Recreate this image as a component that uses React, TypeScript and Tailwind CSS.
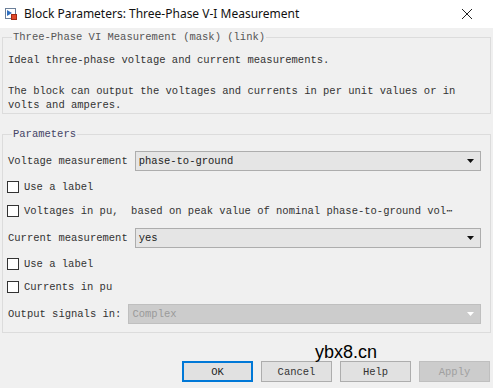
import React from 'react';

const mono = "font-['Liberation_Mono','DejaVu_Sans_Mono',monospace] text-[10.5px] leading-[14px]";

function BlockIcon() {
  return (
    <svg width="12" height="12" viewBox="0 0 12 12" className="shrink-0">
      <rect x="0.5" y="0.5" width="10" height="10" fill="#ffffff" stroke="#6b7f99" />
      <path d="M2 2 L7 5 L2 8 Z" fill="#2f6fc0" />
      <rect x="6.5" y="6.5" width="5" height="5" fill="#e0482a" stroke="#a02a14" />
    </svg>
  );
}

function Checkbox({ label }: { label: string }) {
  return (
    <div className="flex h-[20px] items-center gap-[5px]">
      <span className="ml-[-1px] h-[12px] w-[12px] shrink-0 border border-[#333333] bg-white" />
      <span className="whitespace-pre text-[#333333]">{label}</span>
    </div>
  );
}

function Select({ label, value, disabled }: { label: string; value: string; disabled?: boolean }) {
  return (
    <div className="flex h-[20px] items-center gap-[7px]">
      <span className="whitespace-pre text-[#333333]">{label}</span>
      <div
        className={
          disabled
            ? 'flex h-[20px] flex-1 items-center justify-between border border-[#bfbfbf] bg-[#cccccc] pl-[3px] pr-[6px]'
            : 'flex h-[20px] flex-1 items-center justify-between border border-[#adadad] bg-[#e5e5e5] pl-[3px] pr-[6px]'
        }
      >
        <span className={disabled ? 'text-[#9a9a9a]' : 'text-[#222222]'}>{value}</span>
        <svg width="7" height="4" viewBox="0 0 7 4">
          <path d="M0 0 H7 L3.5 4 Z" fill={disabled ? '#ffffff' : '#111111'} />
        </svg>
      </div>
    </div>
  );
}

function Button({ label, primary, disabled }: { label: string; primary?: boolean; disabled?: boolean }) {
  const cls = primary
    ? 'border-2 border-[#0078d7] bg-[#e1e1e1] text-[#222222]'
    : disabled
    ? 'border border-[#bfbfbf] bg-[#cccccc] text-[#a0a0a0]'
    : 'border border-[#adadad] bg-[#e1e1e1] text-[#333333]';
  return (
    <div className={`flex h-[21px] w-[71px] items-center justify-center ${cls}`}>{label}</div>
  );
}

export default function App() {
  return (
    <div className="relative flex h-[388px] w-[493px] flex-col overflow-hidden bg-[#f0f0f0]">
      {/* title bar */}
      <div className="flex h-[28px] items-center bg-white pl-[5px] pr-[20px]">
        <BlockIcon />
        <span className="ml-[7px] font-['Noto_Sans',sans-serif] text-[12px] text-[#111111]">
          Block Parameters: Three-Phase V-I Measurement
        </span>
        <svg width="12" height="12" viewBox="0 0 12 12" className="ml-auto">
          <path d="M1 1 L11 11 M11 1 L1 11" stroke="#222222" strokeWidth="1" />
        </svg>
      </div>

      <div className={`flex flex-1 flex-col px-[2px] ${mono}`}>
        <fieldset className="mt-[2px] w-[489px] border border-[#dcdcdc] pb-[1px] pl-[5px] pr-[8px]">
          <legend className="ml-[4px] px-[1px] text-[#555555]">Three-Phase VI Measurement (mask) (link)</legend>
          <p className="mt-[9px] text-[#333333]">Ideal three-phase voltage and current measurements.</p>
          <p className="mt-[17px] text-[#333333]">
            The block can output the voltages and currents in per unit values or in
            <br />
            volts and amperes.
          </p>
        </fieldset>

        <fieldset className="mt-[13px] w-[489px] border border-[#dcdcdc] pb-[8px] pl-[5px] pr-[9px]">
          <legend className="ml-[4px] px-[1px] text-[#444466]">Parameters</legend>
          <div className="mt-[10px]">
            <Select label="Voltage measurement" value="phase-to-ground" />
          </div>
          <div className="mt-[6px]">
            <Checkbox label="Use a label" />
          </div>
          <div className="mt-[4px]">
            <Checkbox label="Voltages in pu,  based on peak value of nominal phase-to-ground vol⋯" />
          </div>
          <div className="mt-[7px]">
            <Select label="Current measurement" value="yes" />
          </div>
          <div className="mt-[6px]">
            <Checkbox label="Use a label" />
          </div>
          <div className="mt-[3px]">
            <Checkbox label="Currents in pu" />
          </div>
          <div className="mt-[7px]">
            <Select label="Output signals in:" value="Complex" disabled />
          </div>
        </fieldset>

        <div className="mt-auto mb-[6px] flex justify-end gap-[8px] pr-[1px]">
          <Button label="OK" primary />
          <Button label="Cancel" />
          <Button label="Help" />
          <Button label="Apply" disabled />
        </div>
      </div>

      <span className="absolute left-[315px] top-[342px] font-['Liberation_Sans',sans-serif] text-[18px] leading-[20px] text-black">
        ybx8.cn
      </span>
    </div>
  );
}
